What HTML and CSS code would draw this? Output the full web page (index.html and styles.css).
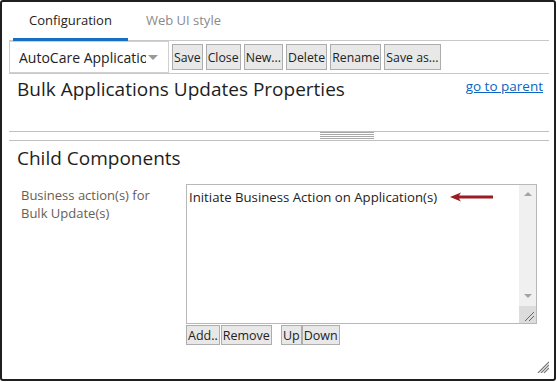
FILE: index.html
```html
<!DOCTYPE html>
<html lang="en">
<head>
    <meta charset="UTF-8">
    <title>Bulk Applications Updates Properties</title>
    <link rel="stylesheet" href="styles.css">
</head>
<body>
    <div class="window">
        <div class="tabs">
            <div class="tab active">Configuration</div>
            <div class="tab">Web UI style</div>
        </div>

        <div class="toolbar">
            <div class="combo">
                <span class="combo-text">AutoCare Applications</span>
                <span class="combo-arrow"></span>
            </div>
            <button class="btn">Save</button>
            <button class="btn">Close</button>
            <button class="btn">New...</button>
            <button class="btn">Delete</button>
            <button class="btn">Rename</button>
            <button class="btn">Save as...</button>
        </div>

        <div class="props-head">
            <h1>Bulk Applications Updates Properties</h1>
            <a href="#" class="parent-link">go to parent</a>
        </div>

        <div class="splitter"><span class="grip"></span></div>

        <div class="child">
            <h2>Child Components</h2>
            <div class="field">
                <div class="label">Business action(s) for Bulk Update(s)</div>
                <div>
                    <div class="listbox">
                        <div class="items">
                            <div class="item">
                                Initiate Business Action on Application(s)
                                <svg class="arrow" width="44" height="10" viewBox="0 0 44 10">
                                    <path d="M0 5 L11 0.5 L9 3.5 L43 3.5 L43 6.5 L9 6.5 L11 9.5 Z" fill="#9b1c22"/>
                                </svg>
                            </div>
                        </div>
                        <div class="scrollbar">
                            <span class="sb-up"></span>
                            <span class="sb-track"></span>
                            <span class="sb-down"></span>
                            <span class="sb-corner">
                                <svg width="10" height="10" viewBox="0 0 10 10">
                                    <path d="M1 10 L10 1 M5 10 L10 5" stroke="#666" stroke-width="1"/>
                                </svg>
                            </span>
                        </div>
                    </div>
                    <div class="list-buttons">
                        <button class="btn small">Add..</button>
                        <button class="btn small">Remove</button>
                        <button class="btn small gap">Up</button>
                        <button class="btn small">Down</button>
                    </div>
                </div>
            </div>
        </div>

        <svg class="resize" width="12" height="12" viewBox="0 0 12 12">
            <path d="M1 12 L12 1 M4 12 L12 4 M7 12 L12 7" stroke="#777" stroke-width="1.2"/>
        </svg>
    </div>
</body>
</html>
```

FILE: styles.css
```css
body {
    margin: 0;
    font-family: "Open Sans", "Noto Sans", sans-serif;
    color: #222;
    background: #fff;
}
.window {
    box-sizing: border-box;
    width: 556px;
    height: 381px;
    border: 2px solid #1f1f1f;
    border-radius: 3px;
    padding: 0 5px 0 7px;
    position: relative;
}

/* tabs */
.tabs {
    display: flex;
    height: 38px;
    padding-left: 4px;
    border-bottom: 1px solid #c8c8c8;
}
.tab {
    padding: 0 16px;
    line-height: 36px;
    font-size: 13px;
    color: #8a8a8a;
}
.tab.active {
    color: #222;
    height: 36px;
    border-bottom: 3px solid #1570c4;
}
.tab + .tab {
    padding-left: 18px;
}

/* toolbar */
.toolbar {
    display: flex;
    align-items: center;
    gap: 3px;
    height: 32px;
    border-bottom: 1px solid #c8c8c8;
}
.combo {
    box-sizing: border-box;
    width: 160px;
    height: 32px;
    border: 1px solid #d0d0d0;
    display: flex;
    align-items: center;
    padding-left: 9px;
    overflow: hidden;
}
.combo-text {
    font-size: 14px;
    white-space: nowrap;
    overflow: hidden;
    width: 127px;
}
.combo-arrow {
    margin-left: 2px;
    border-left: 5px solid transparent;
    border-right: 5px solid transparent;
    border-top: 5px solid #999;
}
.btn {
    font-family: "Open Sans", "Noto Sans", sans-serif;
    font-size: 12.3px;
    color: #222;
    height: 26px;
    padding: 0 1px;
    border: 1px solid #adadad;
    background: #e8e8e8;
    border-radius: 0;
}

/* properties header */
.props-head {
    display: flex;
    justify-content: space-between;
    height: 57px;
    padding: 0 6px 0 8px;
    border-bottom: 1px solid #c0c0c0;
}
h1, h2 {
    margin: 0;
    font-weight: normal;
    font-size: 19px;
    color: #1e1e1e;
}
h1 {
    line-height: 30px;
}
.parent-link {
    font-size: 13.5px;
    color: #0a66c2;
    margin-top: 3px;
}

.splitter {
    height: 8px;
    border-bottom: 1px solid #c0c0c0;
}
.grip {
    display: block;
    margin-left: 311px;
    width: 54px;
    height: 7px;
    background: repeating-linear-gradient(#a8a8a8 0 1px, #fff 1px 2px);
}

/* child components */
.child {
    padding: 2px 0 0 8px;
}
h2 {
    line-height: 30px;
}
.field {
    display: grid;
    grid-template-columns: 165px 351px;
    margin-top: 11px;
    padding-left: 4px;
}
.label {
    font-size: 13px;
    line-height: 18px;
    color: #665e55;
    padding-right: 20px;
    padding-top: 2px;
}
.listbox {
    box-sizing: border-box;
    display: flex;
    height: 140px;
    border: 1px solid #b8b8b8;
}
.items {
    flex: 1;
    padding: 3px 2px;
}
.item {
    display: flex;
    align-items: center;
    font-size: 13.2px;
    line-height: 18px;
    white-space: nowrap;
}
.arrow {
    margin-left: 13px;
}
.scrollbar {
    width: 17px;
    background: #f0f0f0;
    display: flex;
    flex-direction: column;
    align-items: center;
}
.sb-up, .sb-down {
    width: 0;
    height: 0;
    border-left: 4px solid transparent;
    border-right: 4px solid transparent;
}
.sb-up {
    margin-top: 7px;
    border-bottom: 4px solid #a3a3a3;
}
.sb-track {
    flex: 1;
}
.sb-down {
    margin-bottom: 8px;
    border-top: 4px solid #a3a3a3;
}
.sb-corner {
    width: 17px;
    height: 17px;
    background: #dcdcdc;
    display: flex;
    align-items: flex-end;
    justify-content: flex-end;
    padding: 0 2px 2px 0;
    box-sizing: border-box;
}
.list-buttons {
    display: flex;
    gap: 1px;
    margin-top: 1px;
}
.btn.small {
    font-size: 12.5px;
    height: 20px;
    padding: 0 1px;
}
.btn.gap {
    margin-left: 8px;
}
.list-buttons .btn + .btn.small:last-child {
    margin-left: -1px;
}

.resize {
    position: absolute;
    right: 5px;
    bottom: 6px;
}
```
